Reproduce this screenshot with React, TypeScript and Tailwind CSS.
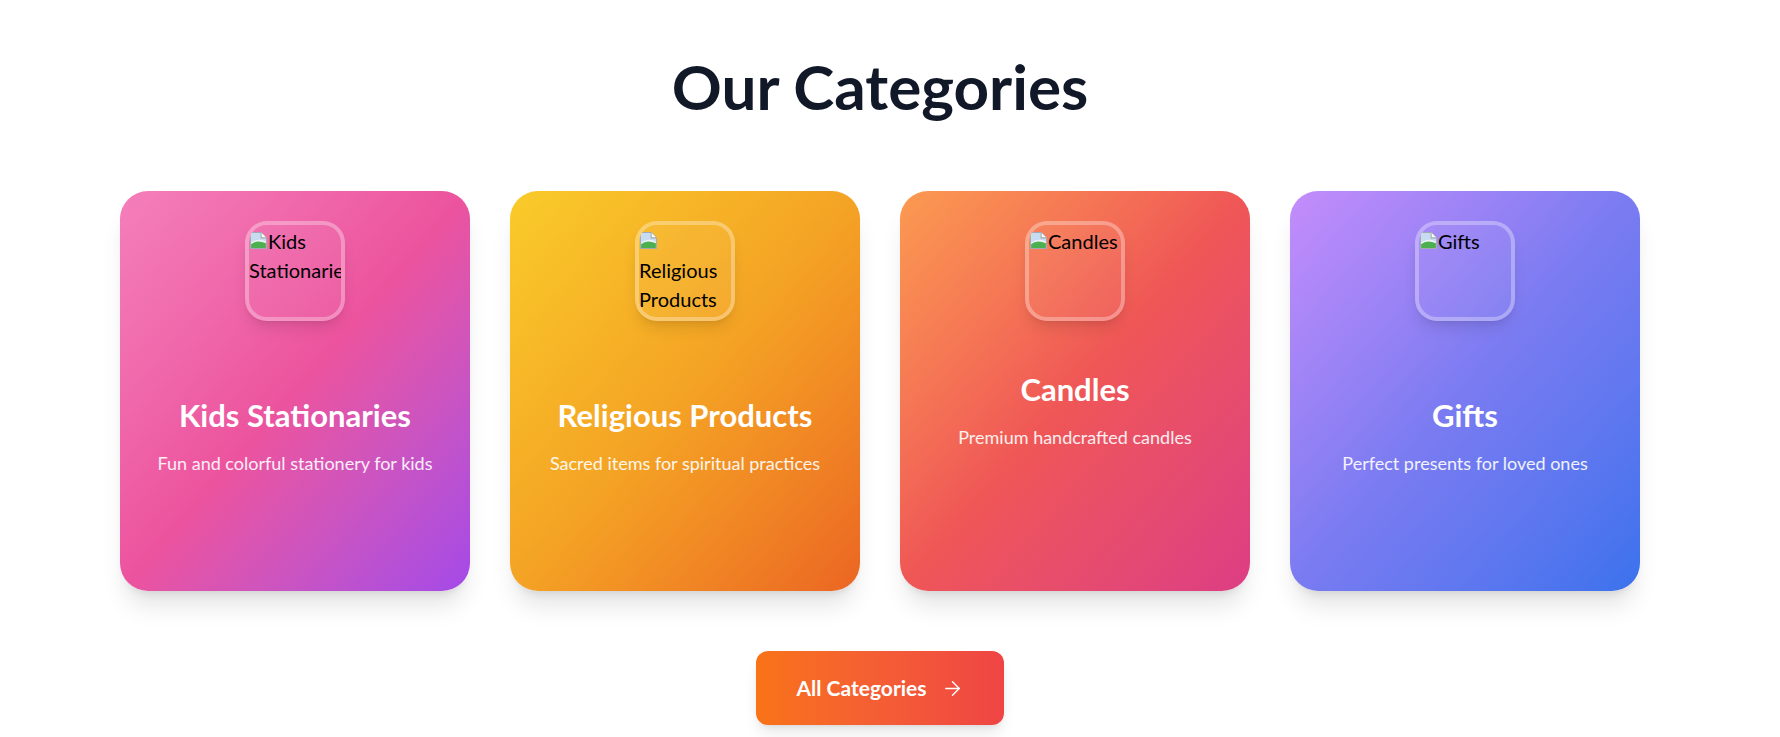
import React from "react";
import { ArrowRight } from "lucide-react";

const FONT = { fontFamily: "Lato, 'Noto Sans', 'Liberation Sans', sans-serif" };

function BrokenImg() {
  return (
    <svg width="19" height="19" viewBox="0 0 18 18" className="inline-block align-[-1px]">
      <path d="M1.5 1.5 H11.5 L16.5 6.5 V16.5 H1.5 Z" fill="#eef3f8" stroke="#a3a9b0" strokeWidth="1" />
      <path d="M2 2 H11 L16 7 V10 Q9 6 2 11 Z" fill="#c7dcf1" />
      <path d="M2 12.5 Q7 8 16 11.5 V16 H2 Z" fill="#4caf50" />
      <path d="M11.5 1.5 V6.5 H16.5" fill="#ffffff" stroke="#a3a9b0" strokeWidth="1" />
    </svg>
  );
}

type Cat = {
  title: string;
  desc: string;
  grad: string;
  mt: string;
  breakAfterIcon: boolean;
};

const cats: Cat[] = [
  {
    title: "Kids Stationaries",
    desc: "Fun and colorful stationery for kids",
    grad: "bg-gradient-to-br from-[#f47fba] via-[#ec539e] to-[#a448e8]",
    mt: "mt-[76px]",
    breakAfterIcon: false,
  },
  {
    title: "Religious Products",
    desc: "Sacred items for spiritual practices",
    grad: "bg-gradient-to-br from-[#f9cb2a] via-[#f4a324] to-[#eb6523]",
    mt: "mt-[76px]",
    breakAfterIcon: true,
  },
  {
    title: "Candles",
    desc: "Premium handcrafted candles",
    grad: "bg-gradient-to-br from-[#fb9a50] via-[#ef5656] to-[#dd3d84]",
    mt: "mt-[50px]",
    breakAfterIcon: false,
  },
  {
    title: "Gifts",
    desc: "Perfect presents for loved ones",
    grad: "bg-gradient-to-br from-[#c48cfb] via-[#7a7bf1] to-[#3a72ed]",
    mt: "mt-[76px]",
    breakAfterIcon: false,
  },
];

function Card({ c }: { c: Cat }) {
  return (
    <div className={`h-[400px] rounded-[28px] ${c.grad} shadow-xl pt-[30px] px-[30px] flex flex-col items-center`}>
      <div className="w-[100px] h-[100px] shrink-0 rounded-[22px] border-4 border-white/30 bg-white/5 shadow-lg overflow-hidden text-left text-black text-[20px] leading-[29px] pt-[2px]">
        <span className="block w-[300px] max-w-none">
          <span className="block w-[92px]">
            <BrokenImg />
            {c.breakAfterIcon && <br />}
            {c.title}
          </span>
        </span>
      </div>
      <div className={`${c.mt} text-center text-white`}>
        <h3 className="text-[31px] leading-9 font-bold">{c.title}</h3>
        <p className="mt-4 text-[18px] leading-7 text-white/90">{c.desc}</p>
      </div>
    </div>
  );
}

export default function App() {
  return (
    <div className="min-h-screen bg-white pr-5" style={FONT}>
      <section className="pt-[55px] pb-10">
        <h2 className="text-center text-[62px] leading-none font-bold text-[#111827]">Our Categories</h2>
        <div className="mt-[74px] max-w-[1520px] mx-auto grid grid-cols-4 gap-10">
          {cats.map((c) => (
            <Card key={c.title} c={c} />
          ))}
        </div>
        <div className="mt-[60px] flex justify-center">
          <button className="h-[74px] px-10 rounded-xl bg-gradient-to-r from-[#f97316] to-[#ef4444] text-white text-[21px] font-bold flex items-center gap-[14px] shadow-lg">
            All Categories
            <ArrowRight size={23} strokeWidth={1.5} />
          </button>
        </div>
      </section>
    </div>
  );
}
